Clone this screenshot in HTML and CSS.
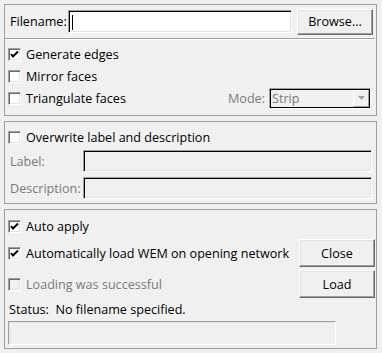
FILE: index.html
```html
<!DOCTYPE html>
<html>
<head>
<meta charset="utf-8">
<link rel="stylesheet" href="styles.css">
</head>
<body>
<div class="win">
  <section class="frame f1">
    <div class="file-row">
      <span class="lbl">Filename:</span>
      <div class="field file-input"><span class="caret"></span></div>
      <button class="btn browse">Browse...</button>
    </div>
    <div class="sep"></div>
    <div class="checks">
      <div class="row"><span class="cb"><svg viewBox="0 0 13 13" width="13" height="13"><polyline points="3,6 5,8.5 10,3.5" fill="none" stroke="#000" stroke-width="2"/></svg></span>Generate edges</div>
      <div class="row"><span class="cb"></span>Mirror faces</div>
      <div class="row"><span class="cb"></span>Triangulate faces
        <div class="mode"><span class="dis">Mode:</span>
          <div class="combo"><span class="dis">Strip</span><span class="arrow"><svg viewBox="0 0 9 5" width="9" height="5"><polygon points="0,0 9,0 4.5,5" fill="#a0a0a0"/></svg></span></div>
        </div>
      </div>
    </div>
  </section>

  <section class="frame f2">
    <div class="row r-over"><span class="cb"></span>Overwrite label and description</div>
    <div class="frow"><span class="dis flbl">Label:</span><div class="field grey"></div></div>
    <div class="frow"><span class="dis flbl">Description:</span><div class="field grey"></div></div>
  </section>

  <section class="frame f3">
    <div class="row r-auto"><span class="cb"><svg viewBox="0 0 13 13" width="13" height="13"><polyline points="3,6 5,8.5 10,3.5" fill="none" stroke="#000" stroke-width="2"/></svg></span>Auto apply</div>
    <div class="brow">
      <div class="row"><span class="cb"><svg viewBox="0 0 13 13" width="13" height="13"><polyline points="3,6 5,8.5 10,3.5" fill="none" stroke="#000" stroke-width="2"/></svg></span>Automatically load WEM on opening network</div>
      <button class="btn side">Close</button>
    </div>
    <div class="brow b2">
      <div class="row dis"><span class="cb cb-dis"></span>Loading was successful</div>
      <button class="btn side">Load</button>
    </div>
    <div class="status">Status:&nbsp; No filename specified.</div>
    <div class="status-field"></div>
  </section>
</div>
</body>
</html>
```
FILE: styles.css
```css
html, body {
  margin: 0;
  padding: 0;
  background: #f0f0f0;
}
body {
  font-family: "Open Sans", "Noto Sans", sans-serif;
  font-size: 12.6px;
  color: #000;
  width: 382px;
  height: 353px;
  overflow: hidden;
}
.win {
  padding: 4px 5px 4px 4px;
  display: flex;
  flex-direction: column;
  gap: 5px;
}
.frame {
  border: 1px solid #a0a0a0;
  box-sizing: border-box;
}
.f1 { height: 112px; }
.f2 { height: 83px; }
.f3 { height: 140px; }

.dis { color: #7a7a7a; }

.file-row {
  height: 33px;
  display: flex;
  align-items: center;
  padding-left: 5px;
}
.lbl { width: 58px; flex: none; }
.field {
  box-sizing: border-box;
  border: 1px solid;
  border-color: #a0a0a0 #fff #fff #a0a0a0;
  box-shadow: inset 1px 1px 0 #000, inset -1px -1px 0 #e3e3e3;
}
.file-input {
  width: 224px;
  height: 23px;
  background: #fff;
  position: relative;
  flex: none;
}
.caret {
  position: absolute;
  left: 3px;
  top: 4px;
  width: 1px;
  height: 15px;
  background: #000;
}
.btn {
  box-sizing: border-box;
  font: inherit;
  color: #000;
  background: #f0f0f0;
  border: 1px solid;
  border-color: #fff #696969 #696969 #fff;
  box-shadow: inset -1px -1px 0 #a0a0a0, inset 1px 1px 0 #e3e3e3;
  padding: 0;
  height: 26px;
  flex: none;
}
.browse {
  width: 76px;
  margin-left: 5px;
}
.sep {
  height: 1px;
  background: #a0a0a0;
  border-bottom: 1px solid #fff;
  margin: 0 1px 0 0;
}
.checks {
  padding-top: 3px;
}
.row {
  display: flex;
  align-items: center;
  height: 22px;
  padding-left: 3px;
  white-space: nowrap;
}
.cb {
  box-sizing: border-box;
  width: 13px;
  height: 13px;
  background: #fff;
  border: 1px solid;
  border-color: #a0a0a0 #fff #fff #a0a0a0;
  box-shadow: inset 1px 1px 0 #696969, inset -1px -1px 0 #e3e3e3;
  margin-right: 5px;
  position: relative;
  flex: none;
}
.cb svg {
  position: absolute;
  left: -1px;
  top: -1px;
}
.cb-dis { background: #f0f0f0; }
.mode {
  margin-left: auto;
  display: flex;
  align-items: center;
  margin-right: 5px;
}
.combo {
  box-sizing: border-box;
  width: 102px;
  height: 21px;
  margin-left: 4px;
  border: 1px solid;
  border-color: #a0a0a0 #fff #fff #a0a0a0;
  box-shadow: inset 1px 1px 0 #000, inset -1px -1px 0 #000;
  display: flex;
  align-items: center;
  padding-left: 2px;
  justify-content: space-between;
}
.arrow {
  width: 16px;
  height: 17px;
  margin-right: 1px;
  box-sizing: border-box;
  border: 1px solid;
  border-color: #fff #a0a0a0 #a0a0a0 #fff;
  display: flex;
  align-items: center;
  justify-content: center;
}
.arrow svg { width: 7px; height: 4px; }

.f2 { padding-top: 5px; }
.r-over { height: 21px; margin-bottom: 2px; }
.frow {
  display: flex;
  align-items: center;
  height: 22px;
  margin-bottom: 5px;
}
.flbl {
  box-sizing: border-box;
  width: 78px;
  padding-left: 5px;
  flex: none;
}
.field.grey {
  width: 289px;
  height: 22px;
  background: #f0f0f0;
  flex: none;
}

.f3 { padding-top: 4px; }
.r-auto { height: 25px; }
.brow {
  display: flex;
  align-items: center;
  justify-content: space-between;
  height: 28px;
}
.b2 { margin-top: 3px; }
.side {
  width: 76px;
  height: 28px;
  margin-right: 1px;
}
.status {
  height: 23px;
  line-height: 23px;
  padding-left: 4px;
}
.status-field {
  box-sizing: border-box;
  margin-left: 3px;
  width: 328px;
  height: 24px;
  border: 1px solid;
  border-color: #a0a0a0 #fff #fff #a0a0a0;
  box-shadow: inset 1px 1px 0 #e3e3e3;
}
```
